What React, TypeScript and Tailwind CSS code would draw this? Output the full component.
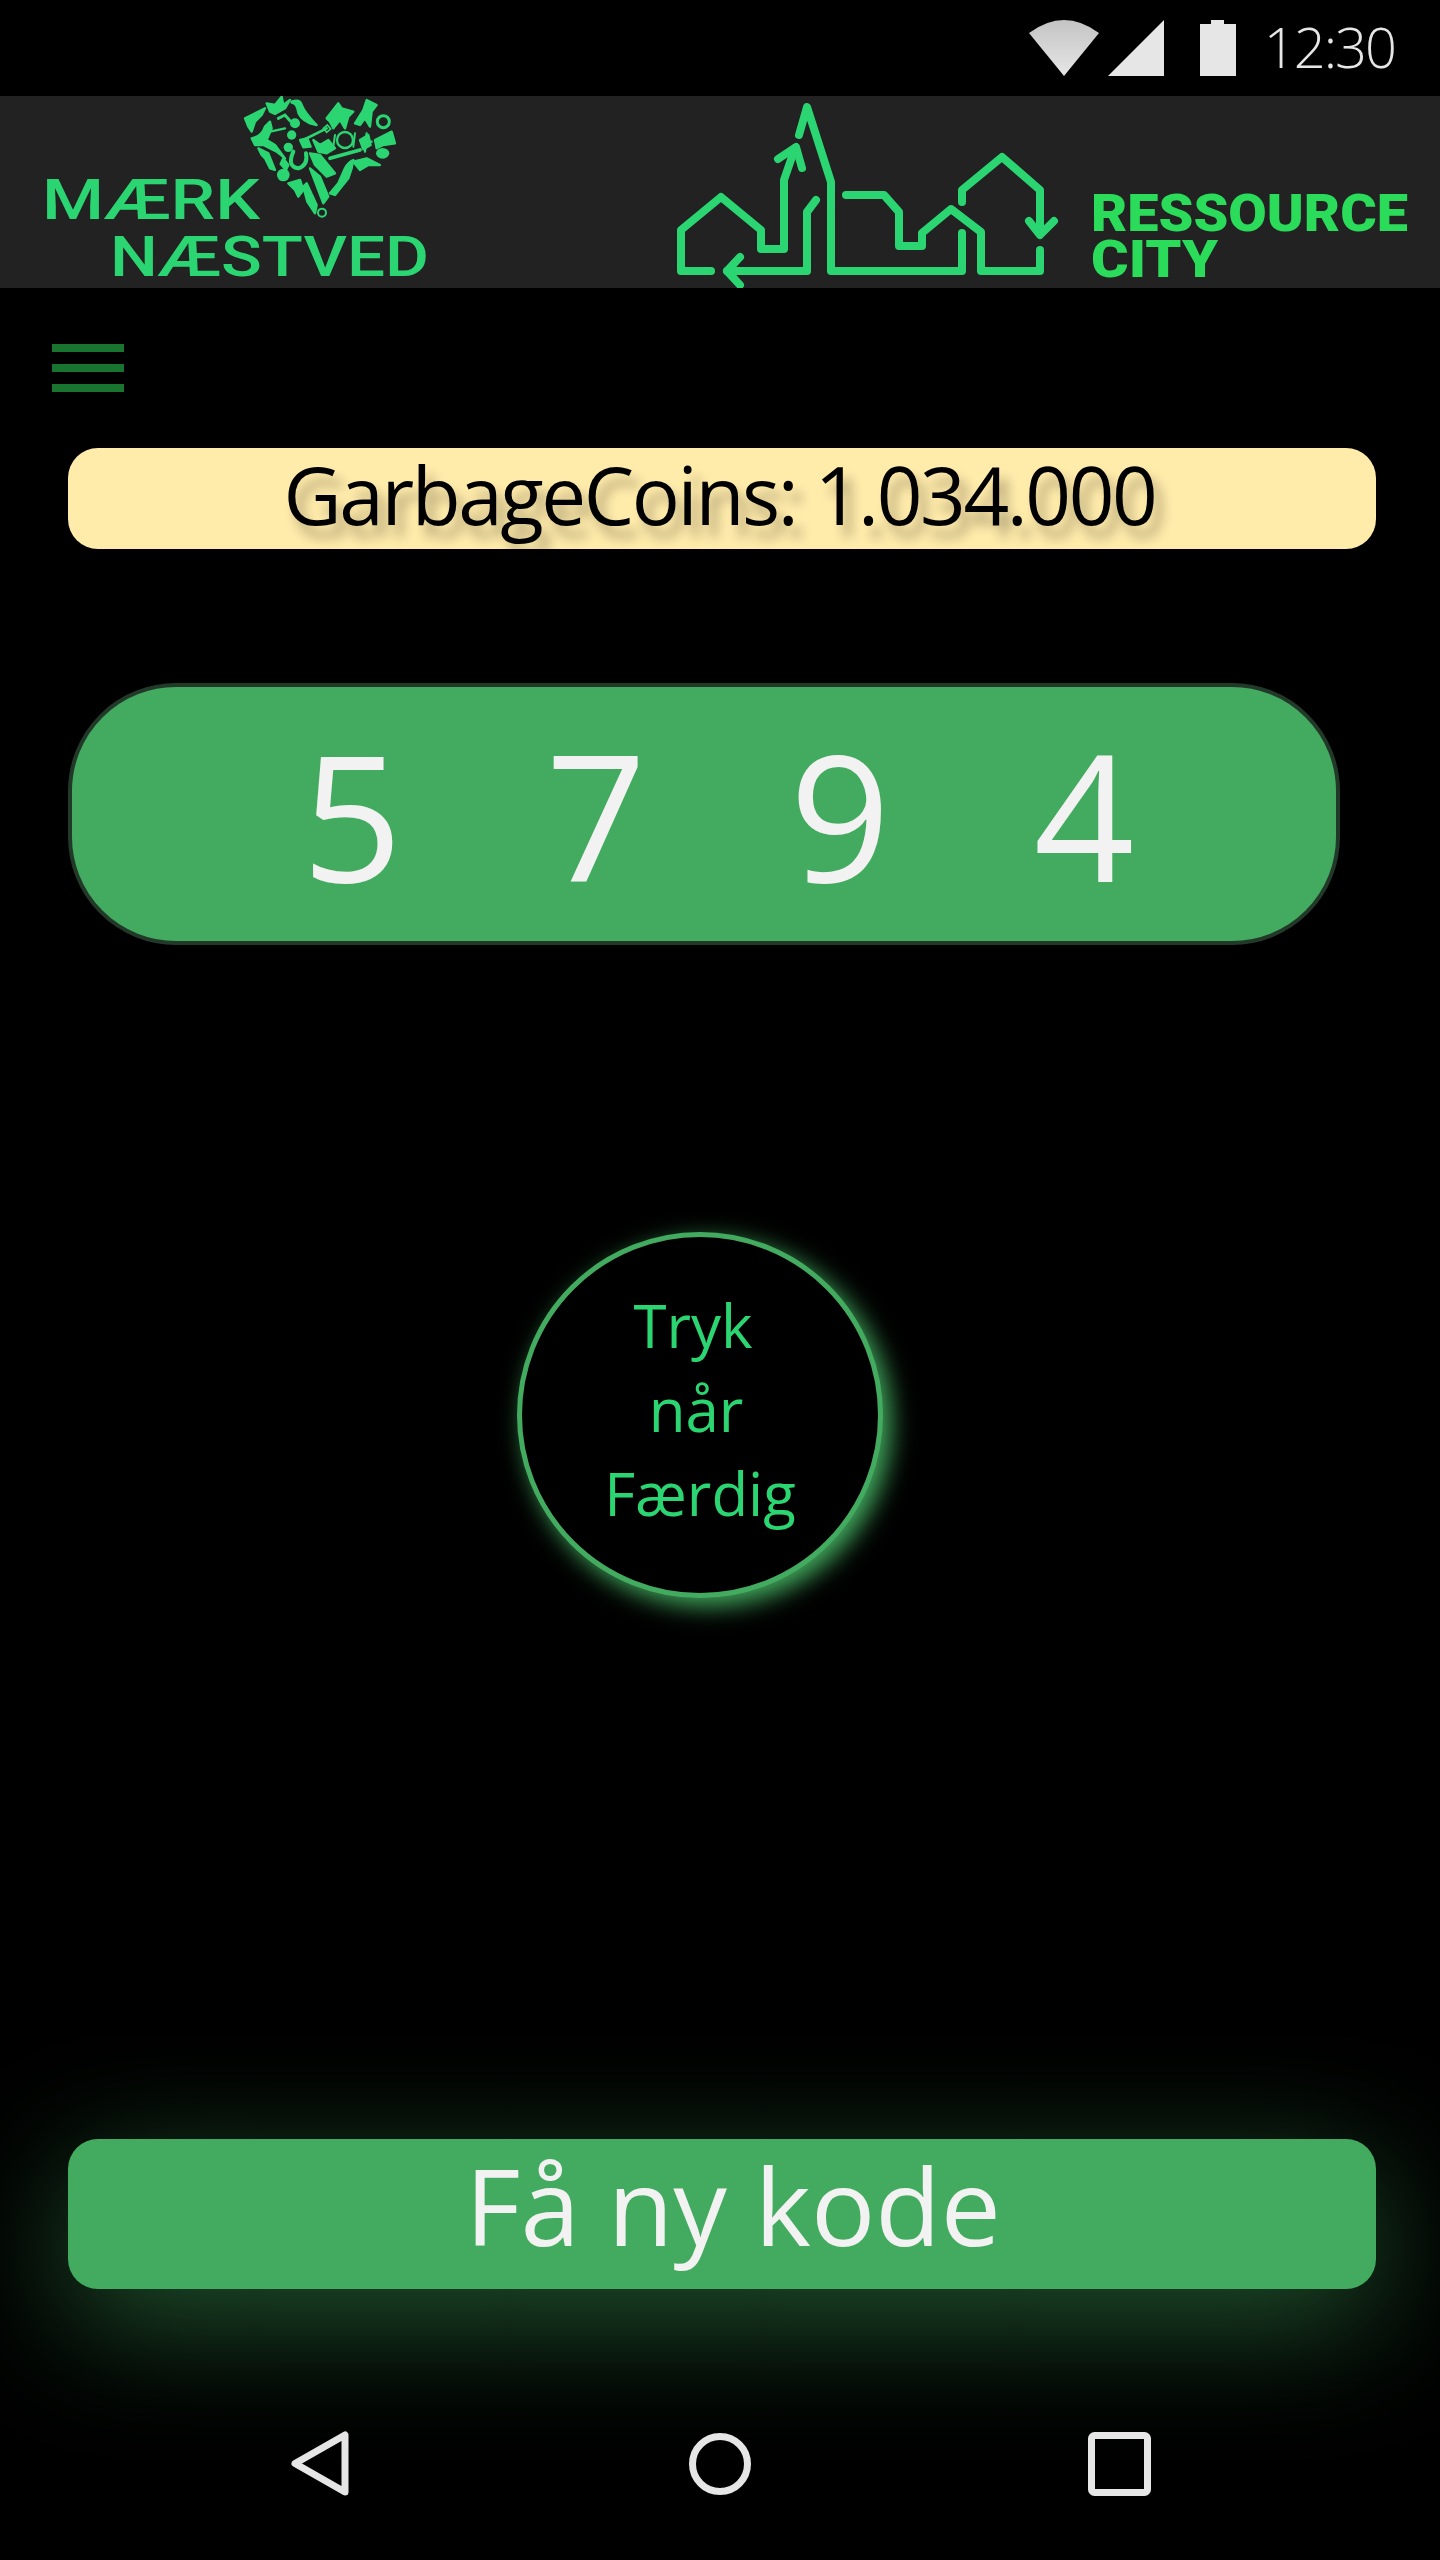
import React from 'react';

const LOGO_GREEN = '#2bd672';

// silhouettes that make up the heart, in 3x crop units
const heartFills = [
  'M75 85 L95 75 L135 55 L125 75 L105 95 L95 125 L85 110Z',
  'M140 40 L165 45 L185 20 L190 45 L210 30 L195 55 L165 72 L150 65Z',
  'M215 35 Q240 25 245 45 Q255 70 290 105 L270 100 Q235 85 232 55 Q228 40 215 38Z',
  'M95 145 Q125 140 135 110 L150 95 L155 115 L140 150 L165 165 L195 205 L170 185 L130 165 L105 165Z',
  'M320 85 L355 40 L365 55 L400 65 L385 80 L375 115 L360 90 L340 115 L330 95Z',
  'M405 100 L430 60 L440 30 L470 45 L455 65 L450 110 L435 85 L420 105Z',
  'M465 150 L515 125 L525 160 L490 165 L470 175Z',
  'M280 150 L300 165 L325 150 L345 175 L320 190 L295 185Z',
  'M115 175 L145 190 L165 240 L150 235 L135 205 L125 195Z',
  'M205 280 L240 270 L250 300 L235 320 L225 300Z',
  'M270 190 L300 195 L345 250 L320 260 L285 225Z',
  'M400 210 Q385 215 375 235 L355 280 L330 310 L345 315 L385 265 L395 235Z',
  'M400 215 L440 205 L480 225 L445 225 L420 240Z',
  'M250 290 L260 280 L290 345 L285 370 L262 335Z',
  'M270 235 L300 260 L325 320 L310 340Z',
  'M240 150 L262 145 L272 170 L250 172Z',
  'M420 150 L445 135 L452 165 L430 178Z',
  'M190 205 L205 225 L198 240 L182 222Z',
];

const heartStrokes = [
  { d: 'M150 125 L195 115', w: 7 },
  { d: 'M250 150 L320 115', w: 8 },
  { d: 'M330 205 L420 180', w: 11 },
  { d: 'M440 130 L435 185 M425 155 L455 155', w: 7 },
  { d: 'M220 185 Q200 230 235 235 Q265 225 258 190', w: 12 },
  { d: 'M310 115 L322 105 L332 117 L320 127Z', w: 5 },
  { d: 'M175 85 L195 75 L210 92', w: 9 },
  { d: 'M345 135 L340 170 M405 130 L400 170', w: 6 },
];

const LeftLogo = () => (
  <svg width="640" height="192" viewBox="0 96 640 192" className="shrink-0">
    <text x="42" y="219" fontFamily="Roboto, sans-serif" fontSize="55" fontWeight="500" fill={LOGO_GREEN} textLength="218" lengthAdjust="spacingAndGlyphs">MÆRK</text>
    <text x="110" y="276" fontFamily="Roboto, sans-serif" fontSize="55" fontWeight="500" fill={LOGO_GREEN} textLength="319" lengthAdjust="spacingAndGlyphs">NÆSTVED</text>
    <g transform="translate(220 90) scale(0.3333)" fill={LOGO_GREEN} stroke="none">
      <g stroke={LOGO_GREEN} strokeWidth="7" strokeLinejoin="round">
        {heartFills.map((d) => <path key={d} d={d} />)}
      </g>
      {heartStrokes.map((s) => <path key={s.d} d={s.d} fill="none" stroke={LOGO_GREEN} strokeWidth={s.w} strokeLinecap="round" />)}
      <circle cx="225" cy="100" r="15" />
      <circle cx="215" cy="135" r="14" />
      <circle cx="205" cy="172" r="14" />
      <circle cx="190" cy="255" r="19" />
      <ellipse cx="488" cy="190" rx="20" ry="16" />
      <circle cx="375" cy="150" r="24" fill="none" stroke={LOGO_GREEN} strokeWidth="7" />
      <circle cx="490" cy="95" r="18" fill="none" stroke={LOGO_GREEN} strokeWidth="9" />
      <circle cx="306" cy="368" r="12" fill="none" stroke={LOGO_GREEN} strokeWidth="6" />
    </g>
  </svg>
);

const RightLogo = () => (
  <svg width="800" height="192" viewBox="0 96 800 192" className="shrink-0">
    <g fill="none" stroke={LOGO_GREEN} strokeWidth="8" strokeLinecap="round" strokeLinejoin="round">
      <path d="M71 271 H41 V230 L81 197 L121 230 V249 H144 V180 L155 148" />
      <path d="M138 159 L156 147 L162 168" />
      <path d="M176 200 L167 212 V271 H87" />
      <path d="M100 257 L87 271 L100 285" />
      <path d="M159 135 L167 107 L191 182 V271 H322 V233" />
      <path d="M206 195 H244 L259 212 V246 H282 V233 L311 209 L341 232 V271 H400 V250" />
      <path d="M322 202 V190 L362 157 L400 190 V233" />
      <path d="M389 221 L400 235 L414 221" />
    </g>
    <text x="451" y="231" fontFamily="Roboto, sans-serif" fontSize="52" fontWeight="900" fill="#2bdb5a" textLength="317" lengthAdjust="spacingAndGlyphs">RESSOURCE</text>
    <text x="451" y="277" fontFamily="Roboto, sans-serif" fontSize="52" fontWeight="900" fill="#2bdb5a" textLength="127" lengthAdjust="spacingAndGlyphs">CITY</text>
  </svg>
);

const StatusBar = () => (
  <div className="h-[96px] flex items-center justify-end pr-[45px] bg-black">
    <svg width="70" height="56" viewBox="0 0 70 56" className="mr-[9px]">
      <defs>
        <linearGradient id="wifi" x1="0" y1="0" x2="0" y2="1">
          <stop offset="0" stopColor="#c4c4c4" />
          <stop offset="1" stopColor="#e6e6e6" />
        </linearGradient>
      </defs>
      <path d="M0 13 Q35 -13 70 13 L35 56Z" fill="url(#wifi)" />
    </svg>
    <svg width="56" height="56" viewBox="0 0 56 56" className="mr-[36px]">
      <path d="M56 0 V56 H0Z" fill="#e6e6e6" />
    </svg>
    <svg width="36" height="56" viewBox="0 0 36 56" className="mr-[28px]">
      <path d="M11 0 H24 V4 H36 V56 H0 V4 H11Z" fill="#e6e6e6" />
    </svg>
    <span className="font-['Open_Sans',sans-serif] font-light text-[56px] leading-none text-[#e6e6e6] tracking-[-2px] pb-[4px]">12:30</span>
  </div>
);

export default function App() {
  return (
    <div className="w-[1440px] h-[2560px] bg-black flex flex-col overflow-hidden font-['Open_Sans',sans-serif]">
      <StatusBar />

      <div className="h-[192px] bg-[#222222] flex shrink-0">
        <LeftLogo />
        <RightLogo />
      </div>

      <button className="ml-[52px] mt-[56px] w-[72px] flex flex-col gap-[12px]">
        <span className="h-[8px] bg-[#18742e]" />
        <span className="h-[8px] bg-[#18742e]" />
        <span className="h-[8px] bg-[#18742e]" />
      </button>

      <div className="mt-[56px] ml-[68px] w-[1308px] h-[101px] rounded-[30px] bg-[#ffebaa] flex items-center justify-center pr-[5px] pb-[10px] text-black text-[80px] tracking-[-2.4px] leading-none [text-shadow:8px_12px_12px_rgba(0,0,0,0.3)]">
        GarbageCoins: 1.034.000
      </div>

      <div className="mt-[134px] ml-[68px] w-[1272px] h-[262px] rounded-[108px] bg-[#43ab5f] border-[4px] border-[#22392a] flex items-center justify-center pl-[28px] text-[#f2f2f2] text-[176px] leading-none">
        <span className="w-[244px] text-center">5</span>
        <span className="w-[244px] text-center">7</span>
        <span className="w-[244px] text-center">9</span>
        <span className="w-[244px] text-center">4</span>
      </div>

      <div className="mt-[287px] ml-[517px] w-[366px] h-[366px] shrink-0 rounded-full bg-black border-[5px] border-[#43ab5f] shadow-[8px_8px_24px_#43ab5f] flex flex-col items-center justify-center pb-[12px] text-[#2bd672] text-[60px] leading-[84px]">
        <span className="mr-[14px]">Tryk</span>
        <span className="mr-[8px]">når</span>
        <span>Færdig</span>
      </div>

      <button className="mt-[541px] ml-[68px] w-[1308px] h-[150px] shrink-0 rounded-[30px] bg-[#43ab5f] shadow-[0_32px_128px_rgba(67,171,95,0.5)] flex items-center justify-center text-[#f2f2f2] text-[107px] leading-none pb-[20px] pl-[22px]">
        Få ny kode
      </button>

      <div className="mt-[141px] flex items-center pl-[290px] text-[#e6e6e6]">
        <svg width="60" height="67" viewBox="0 0 60 67" fill="none" stroke="currentColor" strokeWidth="7" strokeLinejoin="round">
          <path d="M55 5 V62 L5 33.5Z" />
        </svg>
        <svg width="62" height="62" viewBox="0 0 62 62" fill="none" stroke="currentColor" strokeWidth="7" className="ml-[339px]">
          <circle cx="31" cy="31" r="27.5" />
        </svg>
        <svg width="63" height="64" viewBox="0 0 63 64" fill="none" stroke="currentColor" strokeWidth="7" strokeLinejoin="round" className="ml-[337px]">
          <rect x="3.5" y="3.5" width="56" height="57" rx="3" />
        </svg>
      </div>
    </div>
  );
}
